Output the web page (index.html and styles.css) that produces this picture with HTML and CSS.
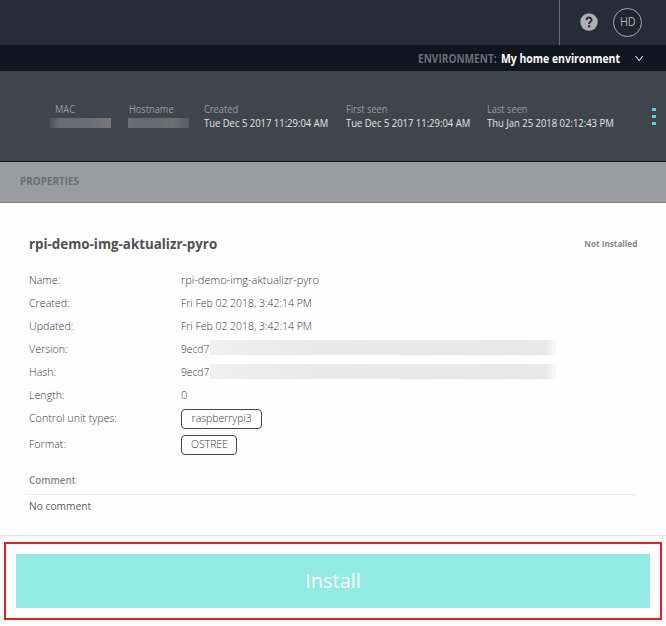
FILE: index.html
```html
<!DOCTYPE html>
<html lang="en">
<head>
<meta charset="utf-8">
<title>Software version</title>
<link rel="stylesheet" href="styles.css">
</head>
<body>
<header class="topbar">
  <div class="account">
    <svg class="help" viewBox="0 0 18 18" width="18" height="18"><circle cx="9" cy="9" r="8.7" fill="#aeb0b3"/><path d="M6.5 7.1C6.5 3.7 11.6 3.8 11.6 6.9C11.6 8.8 9.1 8.6 9.1 10.9" fill="none" stroke="#272d37" stroke-width="1.9"/><rect x="8" y="12.3" width="2.2" height="2.1" fill="#272d37"/></svg>
    <div class="avatar"><span class="initials">HD</span></div>
  </div>
</header>
<nav class="environment">
  <div class="env-label"><span>ENVIRONMENT:</span></div>
  <div class="env-name"><span>My home environment</span></div>
  <svg class="chevron" viewBox="0 0 10 7" width="10" height="7"><path d="M1.5 1L5.2 5.5L8.9 1" fill="none" stroke="#e8e8e9" stroke-width="1.1"/></svg>
</nav>
<section class="device">
  <div class="fact mac"><span class="key">MAC</span><span class="mask mask-mac"></span></div>
  <div class="fact host"><span class="key">Hostname</span><span class="mask mask-host"></span></div>
  <div class="fact created"><span class="key">Created</span><span class="val">Tue Dec 5 2017 11:29:04 AM</span></div>
  <div class="fact first"><span class="key">First seen</span><span class="val">Tue Dec 5 2017 11:29:04 AM</span></div>
  <div class="fact last"><span class="key">Last seen</span><span class="val">Thu Jan 25 2018 02:12:43 PM</span></div>
  <div class="dots"><i></i><i></i><i></i></div>
</section>
<div class="tabs"><span class="tab">PROPERTIES</span></div>
<main class="content">
  <div class="heading"><h1 class="title">rpi-demo-img-aktualizr-pyro</h1><span class="status">Not Installed</span></div>
  <dl class="props">
    <dt>Name:</dt><dd>rpi-demo-img-aktualizr-pyro</dd>
    <dt>Created:</dt><dd><span class="v-date">Fri Feb 02 2018, 3:42:14 PM</span></dd>
    <dt>Updated:</dt><dd><span class="v-date">Fri Feb 02 2018, 3:42:14 PM</span></dd>
    <dt>Version:</dt><dd><span class="v-hash">9ecd7</span><span class="redact redact-up"></span></dd>
    <dt>Hash:</dt><dd><span class="v-hash">9ecd7</span><span class="redact"></span></dd>
    <dt>Length:</dt><dd>0</dd>
    <dt><span class="k-units">Control unit types:</span></dt><dd><span class="chip chip-pi"><span>raspberrypi3</span></span></dd>
    <dt class="format">Format:</dt><dd class="format"><span class="chip chip-os"><span>OSTREE</span></span></dd>
  </dl>
  <h2 class="comment-title"><span>Comment</span></h2>
  <p class="comment"><span>No comment</span></p>
</main>
<footer class="actions">
  <div class="highlight"><button class="install"><span>Install</span></button></div>
</footer>
</body>
</html>
```
FILE: styles.css
```css
* { box-sizing: border-box; }
body { margin: 0; width: 666px; height: 626px; overflow: hidden; background: #fefefe; font-family: "Open Sans", "Noto Sans", sans-serif; font-size: 11px; color: #4a4a4d; white-space: nowrap; }
.topbar { height: 45px; background: #272d37; display: flex; justify-content: flex-end; }
.account { width: 107px; border-left: 1px solid #6b6e74; display: flex; align-items: center; padding-left: 19.5px; gap: 15.5px; }
.help { margin-top: -1px; }
.avatar { width: 29px; height: 29px; border: 1px solid #a9abae; border-radius: 50%; background: #20252f; display: flex; align-items: center; justify-content: center; color: #a9abae; font-size: 12px; }
.initials { transform: scaleX(.9); margin-top: -2px; }
.environment { height: 26px; background: #101620; display: flex; align-items: center; justify-content: flex-end; padding-right: 22px; font-size: 12px; font-weight: 700; }
.environment span { display: inline-block; transform-origin: left; margin-top: -1px; }
.env-label { color: #6a6e74; width: 83px; }
.env-label span { transform: translateX(1px) scaleX(.84); }
.env-name { color: #fff; width: 134px; }
.env-name span { transform: translateX(1px) scaleX(.87); }
.chevron { flex: none; }
.device { height: 91px; background: #3f454c; border-bottom: 1px solid #101620; display: flex; padding: 31px 9px 0 50px; }
.fact { display: flex; flex-direction: column; align-items: flex-start; font-size: 10.5px; line-height: 14px; flex: none; }
.mac { width: 78px; }
.mac .key { margin-left: 5px; }
.host { width: 76px; }
.host .key { margin-left: 1px; }
.created { width: 141.6px; }
.first { width: 141.6px; }
.last { width: 164.8px; }
.key { color: #999c9f; transform: scaleX(.88); transform-origin: left; }
.val { color: #e4e5e6; transform: scaleX(.9); transform-origin: left; }
.mask { width: 61px; height: 10px; margin-top: 2px; }
.mask-mac { background: linear-gradient(90deg, #4c525a, #686b73 15%, #6c6e77 65%, #76787a); }
.mask-host { background: linear-gradient(90deg, #6b6e74, #626970 30%, #697172 75%, #555b63); }
.dots { display: flex; flex-direction: column; gap: 4px; padding-top: 6px; }
.dots i { width: 4px; height: 3px; background: #46d9cf; }
.tabs { height: 41px; background: #9b9ca1; border-bottom: 1px solid #807f85; display: flex; align-items: center; padding: 0 19.5px 3px; color: #6b6d74; font-weight: 700; font-size: 10.5px; }
.tab { transform: scaleX(.945); transform-origin: left; }
.content { height: 333px; border-bottom: 1px solid #e6e6e6; padding: 31px 29px 0; }
.heading { display: flex; justify-content: space-between; align-items: center; height: 20px; }
.title { margin: -1px 0 0; font-size: 14px; font-weight: 700; color: #505053; transform: scaleX(.953); transform-origin: left; }
.status { font-size: 9px; font-weight: 700; color: #86868b; transform: scaleX(.91); transform-origin: right; margin-top: -2px; }
.props { margin: 14px 0 0; display: grid; grid-template-columns: 152px 1fr; grid-auto-rows: 23px; font-weight: 300; color: #36363a; }
.props dt, .props dd { margin: 0; display: flex; align-items: center; height: 23px; }
.props dt { transform: scaleX(.97); transform-origin: left; }
.props .format { height: 29px; }
.v-date { transform: scaleX(.953); transform-origin: left; }
.v-hash { width: 29px; transform: scaleX(.93); transform-origin: left; }
.redact { width: 346px; height: 15px; background: linear-gradient(90deg, #f0f0f0, #e9e9e9 30%, #e7e7e7 90%, #e8e8e8 97%, #fafafa); }
.redact-up { margin-bottom: 2px; }
.chip { height: 20px; border: 1px solid #444447; border-radius: 4px; display: flex; align-items: center; justify-content: center; margin-top: 2px; }
.chip span { transform: scaleX(.95); margin-top: -2px; }
.chip-pi { width: 81px; }
.chip-os { width: 56px; }
.comment-title { margin: 20px 0 0; height: 23px; border-bottom: 1px solid #e6e6e6; font-size: 11px; line-height: 15px; font-weight: 600; color: #86868b; }
.comment-title span { display: inline-block; transform: scaleX(.89); transform-origin: left; }
.comment { margin: 3px 0 0; line-height: 15px; color: #5c5c60; }
.comment span { display: inline-block; transform: scaleX(.93); transform-origin: left; }
.actions { padding: 6px 4px; }
.highlight { height: 78px; border: 2px solid #ed1c24; padding: 10px; }
.install { display: block; width: 634px; height: 54px; padding: 0 0 2px; border: 0; background: #91eae3; color: #fff; font-family: inherit; font-size: 20px; font-weight: 400; }
```
